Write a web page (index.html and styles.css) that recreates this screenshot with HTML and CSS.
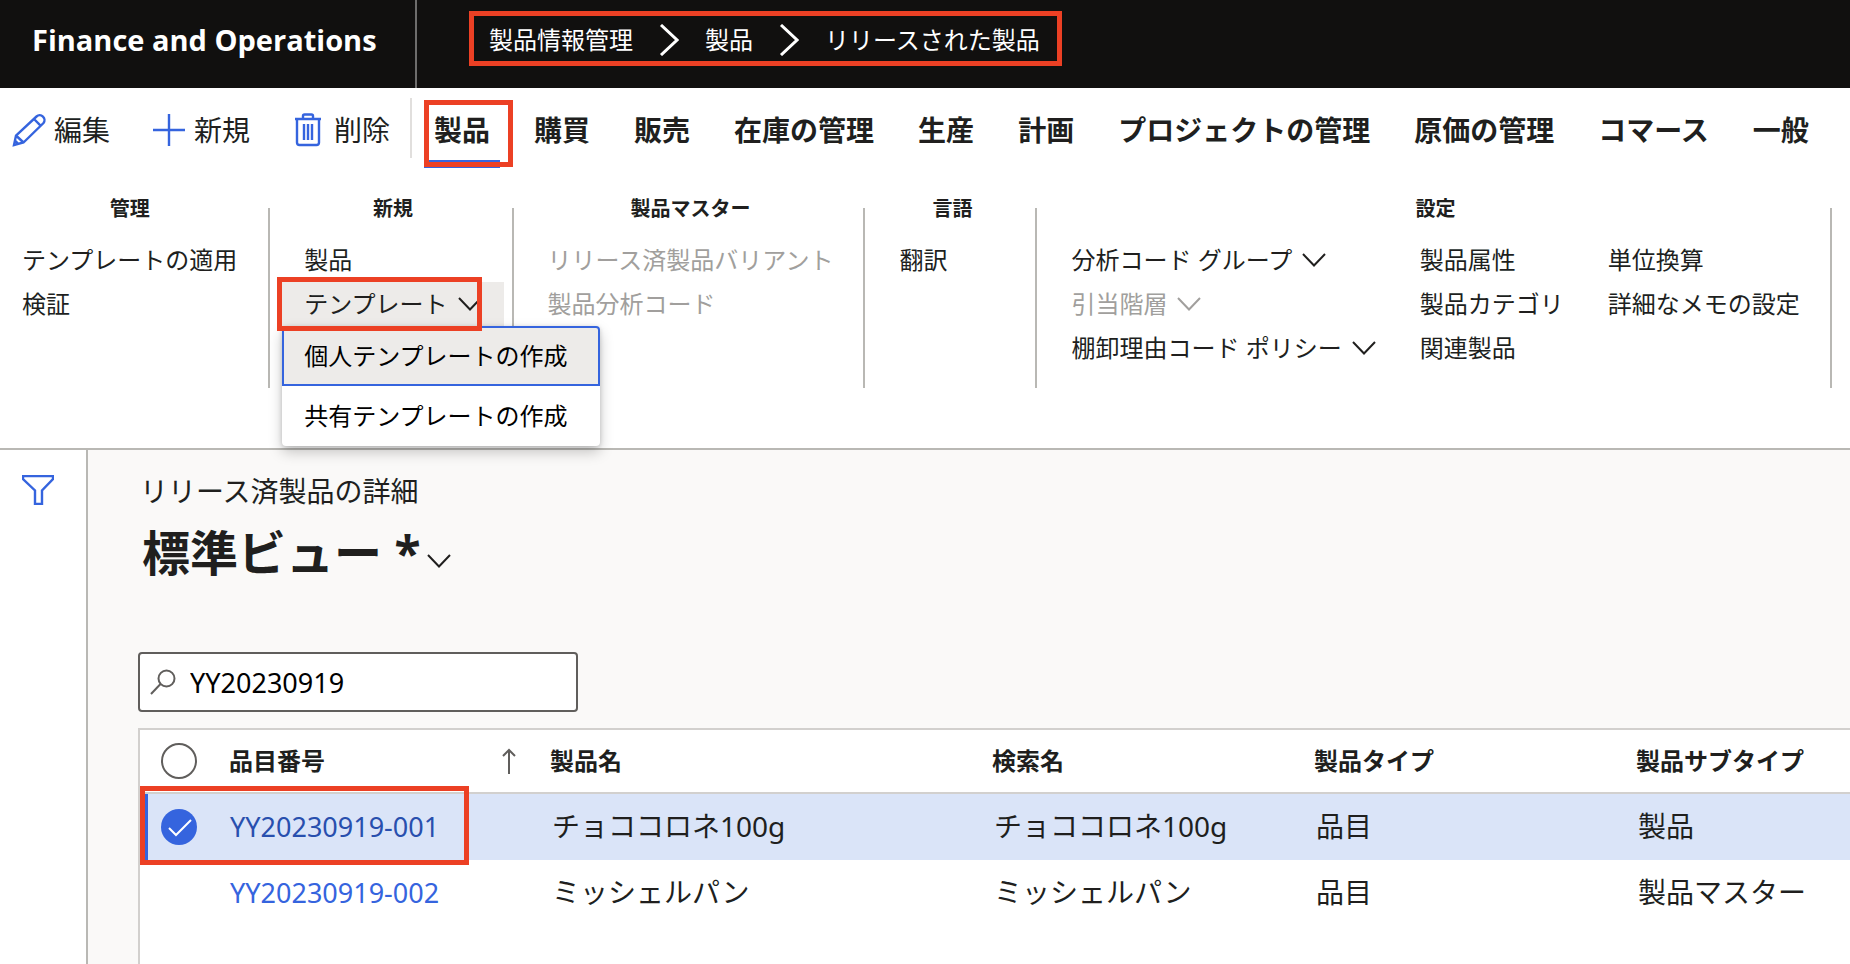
FILE: index.html
```html
<!DOCTYPE html>
<html lang="ja">
<head>
<meta charset="utf-8">
<title>Finance and Operations</title>
<link rel="stylesheet" href="styles.css">
</head>
<body>
<svg class="defs" aria-hidden="true">
  <symbol id="chev" viewBox="0 0 24 14"><path d="M1 1l11 11.5L23 1" fill="none" stroke="currentColor" stroke-width="2"/></symbol>
  <symbol id="crumb" viewBox="0 0 20 32"><path d="M2 1l16 15L2 31" fill="none" stroke="currentColor" stroke-width="3"/></symbol>
</svg>

<header class="topbar">
  <div class="brand">Finance and Operations</div>
  <nav class="crumbs" aria-label="階層リンク">
    <a href="#">製品情報管理</a>
    <svg class="crumb-sep"><use href="#crumb"/></svg>
    <a href="#">製品</a>
    <svg class="crumb-sep"><use href="#crumb"/></svg>
    <a href="#">リリースされた製品</a>
  </nav>
</header>

<section class="ribbon">
  <div class="command-row">
    <div class="actions">
      <button class="action" type="button">
        <svg class="action-icon" viewBox="0 0 34 34"><path d="M2 32l2-9.500L24.500 3.500a4.800 4.800 0 0 1 7 6.500L11.500 29.500zM4 22.500l7.500 7M22 6l6.800 6.800M3 27.500l3.500 3.500"/></svg>編集</button>
      <button class="action" type="button">
        <svg class="action-icon" viewBox="0 0 34 34"><path d="M17 1v32M1 17h32"/></svg>新規</button>
      <button class="action" type="button">
        <svg class="action-icon" viewBox="0 0 34 34"><path d="M3 6h26M11 6V3q0-1.500 1.500-1.500h7Q21 1.500 21 3v3M5 6v23.500Q5 32 7.500 32h17Q27 32 27 29.500V6M12 11v16M16 11v16M20 11v16"/></svg>削除</button>
    </div>
    <nav class="tabs">
      <button class="tab tab-active" type="button">製品</button>
      <button class="tab" type="button">購買</button>
      <button class="tab" type="button">販売</button>
      <button class="tab" type="button">在庫の管理</button>
      <button class="tab" type="button">生産</button>
      <button class="tab" type="button">計画</button>
      <button class="tab" type="button">プロジェクトの管理</button>
      <button class="tab" type="button">原価の管理</button>
      <button class="tab" type="button">コマース</button>
      <button class="tab" type="button">一般</button>
    </nav>
  </div>

  <div class="groups">
    <section class="group group-first">
      <h2>管理</h2>
      <div class="columns"><div class="column">
        <button class="item" type="button">テンプレートの適用</button>
        <button class="item" type="button">検証</button>
      </div></div>
    </section>
    <section class="group">
      <h2>新規</h2>
      <div class="columns"><div class="column">
        <button class="item" type="button">製品</button>
        <div class="dropdown">
          <button class="item item-open" type="button" aria-expanded="true">テンプレート<svg class="chev"><use href="#chev"/></svg></button>
          <div class="menu" role="menu">
            <button class="menu-item menu-item-focus" type="button" role="menuitem">個人テンプレートの作成</button>
            <button class="menu-item" type="button" role="menuitem">共有テンプレートの作成</button>
          </div>
          <span class="mark"></span>
        </div>
      </div></div>
    </section>
    <section class="group">
      <h2>製品マスター</h2>
      <div class="columns"><div class="column">
        <button class="item" type="button" disabled>リリース済製品バリアント</button>
        <button class="item" type="button" disabled>製品分析コード</button>
      </div></div>
    </section>
    <section class="group group-narrow">
      <h2>言語</h2>
      <div class="columns"><div class="column">
        <button class="item" type="button">翻訳</button>
      </div></div>
    </section>
    <section class="group">
      <h2>設定</h2>
      <div class="columns">
        <div class="column">
          <button class="item" type="button">分析コード グループ<svg class="chev"><use href="#chev"/></svg></button>
          <button class="item" type="button" disabled>引当階層<svg class="chev"><use href="#chev"/></svg></button>
          <button class="item" type="button">棚卸理由コード ポリシー<svg class="chev"><use href="#chev"/></svg></button>
        </div>
        <div class="column">
          <button class="item" type="button">製品属性</button>
          <button class="item" type="button">製品カテゴリ</button>
          <button class="item" type="button">関連製品</button>
        </div>
        <div class="column">
          <button class="item" type="button">単位換算</button>
          <button class="item" type="button">詳細なメモの設定</button>
        </div>
      </div>
    </section>
  </div>
</section>

<div class="body">
  <aside class="rail">
    <button class="filter" type="button" aria-label="フィルター">
      <svg viewBox="0 0 32 30"><path d="M1 1h30v3L20 15.500V29h-7V15.500L1 4z"/></svg>
    </button>
  </aside>
  <main class="main">
    <p class="caption">リリース済製品の詳細</p>
    <h1 class="title">標準ビュー *<svg class="title-chev"><use href="#chev"/></svg></h1>
    <label class="search">
      <svg viewBox="0 0 26 26"><circle cx="16.500" cy="9.500" r="8"/><path d="M10.500 15L1 25"/></svg>
      <input type="text" value="YY20230919" aria-label="フィルター">
    </label>
    <div class="grid">
      <table>
        <colgroup><col class="c-check"><col class="c-item"><col class="c-name"><col class="c-search"><col class="c-type"><col></colgroup>
        <thead>
          <tr>
            <th class="check-cell"><label class="check"><input type="checkbox" aria-label="すべて選択"></label></th>
            <th><div class="sorted">品目番号<svg viewBox="0 0 14 26"><path d="M7 26V2M1 8l6-6 6 6"/></svg></div></th>
            <th>製品名</th><th>検索名</th><th>製品タイプ</th><th>製品サブタイプ</th>
          </tr>
        </thead>
        <tbody>
          <tr class="selected">
            <td class="check-cell"><label class="check"><input type="checkbox" checked aria-label="YY20230919-001を選択"><svg viewBox="0 0 36 36"><path d="M8 19l7 7 15-15"/></svg></label><span class="mark"></span></td>
            <td><a href="#">YY20230919-001</a></td>
            <td>チョココロネ100g</td><td>チョココロネ100g</td><td>品目</td><td>製品</td>
          </tr>
          <tr>
            <td></td>
            <td><a href="#">YY20230919-002</a></td>
            <td>ミッシェルパン</td><td>ミッシェルパン</td><td>品目</td><td>製品マスター</td>
          </tr>
        </tbody>
      </table>
    </div>
  </main>
</div>
</body>
</html>
```

FILE: styles.css
```css
:root {
  --blue: #3564de;
  --red: #ec4024;
  --ink: #201f1e;
  --line: #b9b8b4;
  --soft: #d2d0ce;
}

* { box-sizing: border-box; }

body {
  margin: 0;
  min-height: 100vh;
  display: flex;
  flex-direction: column;
  overflow-x: hidden;
  background: #fff;
  color: var(--ink);
  font: 24px/32px "Noto Sans", "Noto Sans CJK JP", sans-serif;
}

button {
  margin: 0;
  padding: 0;
  border: 0;
  background: none;
  color: inherit;
  font: inherit;
  white-space: nowrap;
  cursor: pointer;
}

a { text-decoration: none; color: inherit; }
.defs { position: absolute; width: 0; height: 0; }

/* Top bar */
.topbar {
  display: flex;
  height: 88px;
  background: #11100f;
  color: #fff;
}
.brand {
  flex: none;
  width: 417px;
  padding: 20px 0 0 32px;
  border-right: 2px solid #6e6d6c;
  font: 700 29px/40px "Open Sans", sans-serif;
  white-space: nowrap;
}
.crumbs {
  display: flex;
  align-items: center;
  height: 55px;
  margin: 11px 0 0 52px;
  padding: 2px 17px 0 15px;
  border: 5px solid var(--red);
  white-space: nowrap;
}
.crumb-sep { width: 20px; height: 32px; margin: 0 26px; }

/* Command row */
.command-row { display: flex; height: 80px; }
.actions {
  display: flex;
  gap: 42px;
  padding: 4px 20px 0 12px;
  font-size: 28px;
}
.action { display: flex; align-items: center; gap: 8px; }
.action-icon {
  width: 34px;
  height: 34px;
  fill: none;
  stroke: var(--blue);
  stroke-width: 2.4;
}
.tabs {
  display: flex;
  gap: 24px;
  position: relative;
  padding-left: 14px;
  font-size: 28px;
  font-weight: 700;
}
.tabs::before {
  content: "";
  position: absolute;
  left: 0;
  top: 10px;
  bottom: 10px;
  width: 2px;
  background: #e1dfdd;
}
.tab { position: relative; padding: 4px 10px 0; }
.tab-active { box-shadow: inset 0 -8px var(--blue); }
.tab-active::after {
  content: "";
  position: absolute;
  inset: 12px -13px 1px 0;
  border: 5px solid var(--red);
}

/* Command groups */
.ribbon { border-bottom: 2px solid var(--line); }
.groups { display: flex; padding: 29px 0 60px; }
.group {
  position: relative;
  flex: none;
  padding: 0 10px 18px 12px;
}
.group-first { padding-left: 0; }
.group-first { padding-right: 11px; }
.group-narrow { width: 172px; }
.group::after {
  content: "";
  position: absolute;
  top: 11px;
  right: 0;
  bottom: 0;
  width: 2px;
  background: var(--line);
}
.group h2 {
  margin: 0 0 17px;
  font-size: 20px;
  line-height: 24px;
  text-align: center;
}
.columns { display: flex; min-height: 132px; }
.column { display: flex; flex-direction: column; }
.item {
  display: flex;
  align-items: center;
  gap: 10px;
  height: 44px;
  padding: 0 22px;
}
.item:disabled { color: #a19f9d; cursor: default; }
.item-open { background: #edebe9; }
.chev { flex: none; width: 24px; height: 14px; }
.dropdown { position: relative; }
.dropdown .mark {
  position: absolute;
  z-index: 3;
  inset: -5px 22px -5px -5px;
  border: 5px solid var(--red);
  pointer-events: none;
}
.menu {
  position: absolute;
  z-index: 2;
  top: 100%;
  left: 0;
  min-width: 318px;
  border-radius: 4px;
  background: #fff;
  box-shadow: 0 6px 14px rgba(0, 0, 0, .22), 0 1px 4px rgba(0, 0, 0, .16);
  color: #000;
}
.menu-item {
  display: block;
  width: 100%;
  height: 60px;
  padding: 0 20px;
  border: 2px solid transparent;
  border-radius: 4px;
  text-align: left;
}
.menu-item-focus {
  border-color: var(--blue);
  border-radius: 4px 4px 0 0;
  background: #edebe9;
}

/* Page body */
.body { flex: 1; display: flex; }
.rail {
  flex: none;
  width: 88px;
  padding: 25px 0 0 22px;
  border-right: 2px solid var(--line);
}
.filter svg {
  display: block;
  width: 32px;
  height: 30px;
  fill: none;
  stroke: var(--blue);
  stroke-width: 2.4;
}
.main {
  flex: 1;
  min-width: 0;
  display: flex;
  flex-direction: column;
  padding: 21px 0 0 50px;
  background: #faf9f8;
}
.caption { margin: 0; padding-left: 2px; font-size: 28px; line-height: 40px; }
.title {
  display: flex;
  align-items: center;
  gap: 6px;
  margin: 12px 0 0;
  padding-left: 4px;
  font-size: 48px;
  line-height: 60px;
}
.title-chev { width: 24px; height: 14px; margin-top: 16px; }
.search {
  display: flex;
  align-items: center;
  gap: 14px;
  width: 440px;
  height: 60px;
  margin: 69px 0 16px;
  padding: 0 10px;
  border: 2px solid #605e5c;
  border-radius: 4px;
  background: #fff;
}
.search svg {
  flex: none;
  width: 26px;
  height: 26px;
  fill: none;
  stroke: #605e5c;
  stroke-width: 2;
}
.search input {
  flex: 1;
  min-width: 0;
  padding: 2px 0 0;
  border: 0;
  outline: 0;
  background: none;
  color: #000;
  font: inherit;
  font-size: 27px;
}

/* Grid */
.grid {
  flex: 1;
  border: 2px solid var(--soft);
  border-width: 2px 0 0 2px;
  background: #fff;
}
table { width: 100%; table-layout: fixed; border-collapse: separate; border-spacing: 0; }
.c-check { width: 75px; }
.c-item { width: 321px; }
.c-name { width: 442px; }
.c-search, .c-type { width: 322px; }
th, td { padding: 0 14px; text-align: left; white-space: nowrap; }
th { height: 64px; padding-right: 0; border-bottom: 2px solid var(--soft); }
td { height: 66px; padding-left: 16px; padding-right: 0; padding-bottom: 2px; font-size: 28px; }
td a { color: var(--blue); font-size: 27px; margin-left: -1px; }
.selected { background: #dae4f8; }
.selected a { color: #284fae; }
.sorted { display: flex; justify-content: space-between; align-items: center; padding-right: 20px; }
.sorted svg { width: 14px; height: 26px; fill: none; stroke: #605e5c; stroke-width: 2; }
.check-cell { position: relative; padding: 0 0 0 21px; }
.selected .check-cell { box-shadow: inset 8px 0 var(--blue); }
.check { display: grid; width: 36px; height: 36px; }
.check input, .check svg { grid-area: 1 / 1; width: 36px; height: 36px; margin: 0; }
.check input { appearance: none; border: 2px solid #605e5c; border-radius: 50%; }
.check input:checked { border: 0; background: var(--blue); }
.check svg { fill: none; stroke: #fff; stroke-width: 2; pointer-events: none; }
.check-cell .mark {
  position: absolute;
  left: 0;
  top: -8px;
  width: 329px;
  height: 79px;
  border: 5px solid var(--red);
  pointer-events: none;
}
```
